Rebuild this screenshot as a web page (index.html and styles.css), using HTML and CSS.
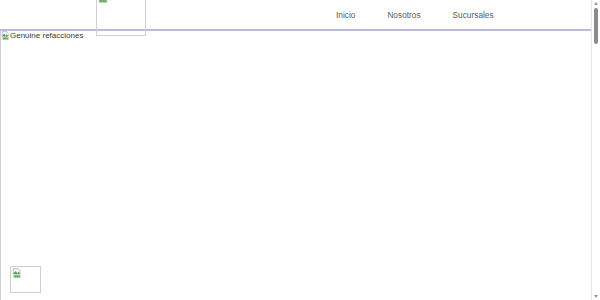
FILE: index.html
```html
<!DOCTYPE html>
<html lang="es">
<head>
<meta charset="utf-8">
<title>Genuine refacciones</title>
<link rel="stylesheet" href="styles.css">
</head>
<body>
<header class="header">
  <div class="logo">
    <svg class="broken" width="16" height="16" viewBox="0 0 16 16"><path d="M2 1h8l3 3v5l-2 1-2-1-2 1-2-1-3 1z" fill="#eef3f8" stroke="#9aa7b5" stroke-width="1"/><path d="M2.5 8l3-3 3 3 2-2 2 2v1l-2 1-2-1-2 1-2-1-2 1z" fill="#5aa64a"/><path d="M3 12l2-1 2 1 2-1 2 1 2-1v4H3z" fill="#6bb35a" stroke="#9aa7b5" stroke-width="0.8"/></svg>
  </div>
  <nav class="nav">
    <a class="nav-link" href="#">Inicio</a>
    <a class="nav-link" href="#">Nosotros</a>
    <a class="nav-link" href="#">Sucursales</a>
  </nav>
</header>
<main class="main">
  <div class="hero">
    <svg class="broken" width="16" height="16" viewBox="0 0 16 16"><path d="M2 1h8l3 3v5l-2 1-2-1-2 1-2-1-3 1z" fill="#eef3f8" stroke="#9aa7b5" stroke-width="1"/><path d="M2.5 8l3-3 3 3 2-2 2 2v1l-2 1-2-1-2 1-2-1-2 1z" fill="#5aa64a"/><path d="M3 12l2-1 2 1 2-1 2 1 2-1v4H3z" fill="#6bb35a" stroke="#9aa7b5" stroke-width="0.8"/></svg>
    <span class="alt">Genuine refacciones</span>
  </div>
</main>
<a class="float-btn" href="#">
  <svg class="broken" width="16" height="16" viewBox="0 0 16 16"><path d="M2 1h8l3 3v5l-2 1-2-1-2 1-2-1-3 1z" fill="#eef3f8" stroke="#9aa7b5" stroke-width="1"/><path d="M2.5 8l3-3 3 3 2-2 2 2v1l-2 1-2-1-2 1-2-1-2 1z" fill="#5aa64a"/><path d="M3 12l2-1 2 1 2-1 2 1 2-1v4H3z" fill="#6bb35a" stroke="#9aa7b5" stroke-width="0.8"/></svg>
</a>
<div class="scrollbar" aria-hidden="true">
  <span class="arrow arrow-up"></span>
  <span class="thumb"></span>
  <span class="arrow arrow-down"></span>
</div>
</body>
</html>
```
FILE: styles.css
```css
html, body {
  margin: 0;
  padding: 0;
  background: #ffffff;
  font-family: "Liberation Sans", Arial, sans-serif;
}

.header {
  position: relative;
  height: 29px;
  border-bottom: 2px solid #bcb8d6;
  display: flex;
  align-items: center;
}

.logo {
  position: absolute;
  left: 96px;
  top: -10px;
  width: 50px;
  height: 46px;
  border: 1px solid #cfcfcf;
  box-sizing: border-box;
  overflow: hidden;
}

.logo .broken {
  display: block;
  width: 12px;
  height: 12px;
}

.nav {
  display: flex;
  gap: 32px;
  margin-left: 336px;
  padding-top: 0;
}

.nav-link {
  font-size: 8.3px;
  color: #5a5a5a;
  text-decoration: none;
}

.main {
  height: 2400px;
  border-left: 1px solid #d0d0d0;
}

.hero {
  display: flex;
  align-items: center;
  height: 9px;
  padding-top: 0;
}

.hero .broken {
  width: 9px;
  height: 9px;
  flex: none;
}

.alt {
  font-size: 8px;
  color: #3a3a3a;
}

.float-btn {
  position: fixed;
  left: 10px;
  bottom: 7px;
  width: 31px;
  height: 27px;
  border: 1px solid #cfcfcf;
  box-sizing: border-box;
  background: #ffffff;
}

.float-btn .broken {
  display: block;
  width: 10px;
  height: 10px;
  margin: 1px 0 0 1px;
}

.scrollbar {
  position: fixed;
  top: 0;
  right: 0;
  width: 8px;
  height: 100%;
  background: #ffffff;
  border-left: 1px solid #e6e6e6;
}

.thumb {
  position: absolute;
  left: 2px;
  top: 8px;
  width: 4px;
  height: 36px;
  border-radius: 2px;
  background: #8c8c8c;
}

.arrow {
  position: absolute;
  left: 2px;
  width: 0;
  height: 0;
  border-left: 2px solid transparent;
  border-right: 2px solid transparent;
}

.arrow-up {
  top: 2px;
  border-bottom: 3px solid #9a9a9a;
}

.arrow-down {
  bottom: 2px;
  border-top: 3px solid #9a9a9a;
}
```
